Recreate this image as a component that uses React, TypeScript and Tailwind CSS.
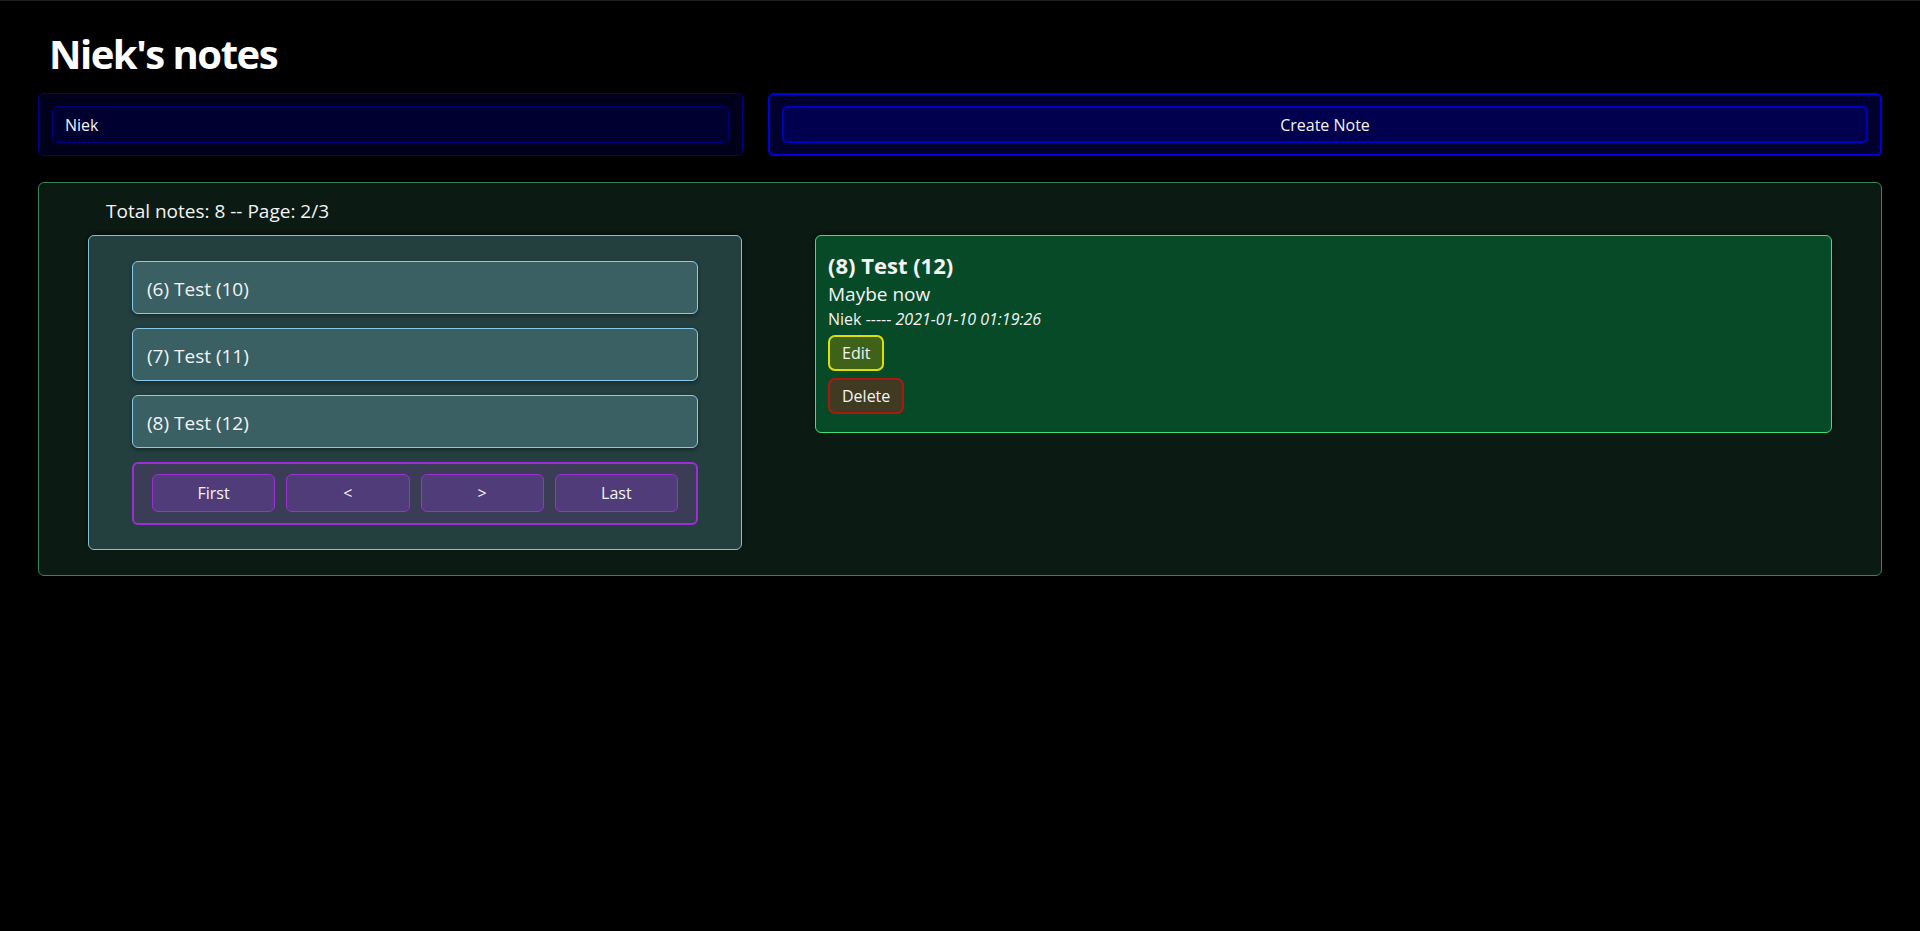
import React from "react";

const font = { fontFamily: '"Open Sans", "Noto Sans", sans-serif' };

function NoteItem({ label }: { label: string }) {
  return (
    <div className="h-[53px] rounded-[6px] border border-[#88cbe8] bg-[#3a6064] pl-[14px] pt-[14px] text-[19px] leading-[26px] text-[#f4f4f4] shadow-[0_2px_4px_rgba(0,0,0,0.35)]">
      {label}
    </div>
  );
}

function PageButton({ label }: { label: string }) {
  return (
    <button className="h-[38px] flex-1 rounded-[6px] border border-[#9a30d4] bg-[#503c78] text-[16px] leading-[22px] text-[#f4f4f4]">
      {label}
    </button>
  );
}

export default function App() {
  return (
    <div
      style={font}
      className="min-h-screen border-t border-[#1e1e1e] bg-black px-[38px] pb-10 text-white"
    >
      <h1 className="ml-[11px] mt-[29px] text-[40px] font-bold leading-[48px] tracking-[-1.5px] text-white">
        Niek's notes
      </h1>

      <div className="mt-[15px] grid grid-cols-[705px_1fr] gap-[25px]">
        <div className="h-[63px] rounded-[6px] border border-[#000090] bg-[#00001a] px-[13px] py-[12px]">
          <input
            readOnly
            value="Niek"
            style={font}
            className="h-[37px] w-full rounded-[5px] border border-[#000078] bg-[#000030] pl-[12px] text-[16px] text-[#f4f4f4] outline-none"
          />
        </div>
        <div className="h-[63px] rounded-[6px] border-2 border-[#0000e0] bg-[#00002c] px-[12px] py-[11px]">
          <button className="h-[37px] w-full rounded-[5px] border-2 border-[#0000c0] bg-[#00004e] text-[16px] leading-[22px] text-[#f4f4f4]">
            Create Note
          </button>
        </div>
      </div>

      <div className="mt-[26px] rounded-[6px] border border-[#338556] bg-[#0b1a12] pb-[25px] pt-[15px]">
        <div className="pl-[67px] text-[19px] leading-[26px] text-[#f4f4f4]">
          Total notes: 8 -- Page: 2/3
        </div>
        <div className="mt-[11px] flex items-start pl-[49px] pr-[49px]">
          <div className="w-[654px] rounded-[6px] border border-[#88c2d2] bg-[#233f3e] px-[43px] pb-[24px] pt-[25px] shadow-[0_-2px_4px_rgba(0,0,0,0.4)]">
            <div className="flex flex-col gap-[14px]">
              <NoteItem label="(6) Test (10)" />
              <NoteItem label="(7) Test (11)" />
              <NoteItem label="(8) Test (12)" />
              <div className="flex h-[63px] gap-[11px] rounded-[6px] border-2 border-[#9c2ed6] bg-[#3b3c55] px-[18px] py-[10px]">
                <PageButton label="First" />
                <PageButton label="<" />
                <PageButton label=">" />
                <PageButton label="Last" />
              </div>
            </div>
          </div>

          <div className="ml-[73px] flex-1 rounded-[6px] border border-[#40e07c] bg-[#074a28] px-[12px] pb-[18px] pt-[14px] shadow-[0_-2px_4px_rgba(0,0,0,0.4)]">
            <div className="text-[22px] font-bold leading-[30px] text-[#f4f4f4]">
              (8) Test (12)
            </div>
            <div className="text-[19px] leading-[28px] text-[#f4f4f4]">Maybe now</div>
            <div className="text-[16px] leading-[22px] text-[#f4f4f4]">
              Niek ----- <i>2021-01-10 01:19:26</i>
            </div>
            <div className="mt-[5px] flex flex-col items-start gap-[7px]">
              <button className="h-[36px] rounded-[7px] border-2 border-[#e0e000] bg-[#3d6218] px-[12px] text-[16px] leading-[22px] text-[#f4f4f4]">
                Edit
              </button>
              <button className="h-[36px] rounded-[7px] border-2 border-[#a81a10] bg-[#403a22] px-[12px] text-[16px] leading-[22px] text-[#f4f4f4]">
                Delete
              </button>
            </div>
          </div>
        </div>
      </div>
    </div>
  );
}
